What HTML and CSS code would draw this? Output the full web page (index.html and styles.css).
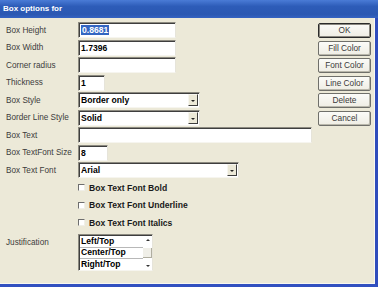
FILE: index.html
```html
<!DOCTYPE html>
<html lang="en">
  <head>
    <meta charset="UTF-8" />
    <title>Box options for</title>
    <link rel="stylesheet" href="styles.css">
  </head>
  <body>
    <div class="dialog">
      <!-- Title bar -->
      <div class="title-bar">Box options for</div>

      <div class="dialog-body">
        <!-- Form fields -->
        <div class="form">
          <div class="label">Box Height</div>
          <div class="field w-98"><span class="sel">0.8681</span></div>

          <div class="label">Box Width</div>
          <div class="field w-98">1.7396</div>

          <div class="label">Corner radius</div>
          <div class="field w-98"></div>

          <div class="label">Thickness</div>
          <div class="field w-27">1</div>

          <div class="label">Box Style</div>
          <div class="combo w-122">
            <span class="combo-text">Border only</span>
            <span class="combo-btn"></span>
          </div>

          <div class="label">Border Line Style</div>
          <div class="combo w-122">
            <span class="combo-text">Solid</span>
            <span class="combo-btn"></span>
          </div>

          <div class="label">Box Text</div>
          <div class="field w-234"></div>

          <div class="label">Box TextFont Size</div>
          <div class="field w-30">8</div>

          <div class="label">Box Text Font</div>
          <div class="combo w-161">
            <span class="combo-text">Arial</span>
            <span class="combo-btn"></span>
          </div>

          <div class="label"></div>
          <label class="check"><span class="box"></span>Box Text Font Bold</label>

          <div class="label"></div>
          <label class="check"><span class="box"></span>Box Text Font Underline</label>

          <div class="label"></div>
          <label class="check"><span class="box"></span>Box Text Font Italics</label>

          <div class="label just-label">Justification</div>
          <div class="listbox">
            <div class="list-items">
              <div class="item">Left/Top</div>
              <div class="item focused">Center/Top</div>
              <div class="item">Right/Top</div>
            </div>
            <div class="scroll">
              <span class="arrow up"></span>
              <span class="thumb"></span>
              <span class="arrow down"></span>
            </div>
          </div>
        </div>

        <!-- Action buttons -->
        <div class="buttons">
          <div class="btn default">OK</div>
          <div class="btn">Fill Color</div>
          <div class="btn">Font Color</div>
          <div class="btn">Line Color</div>
          <div class="btn">Delete</div>
          <div class="btn">Cancel</div>
        </div>
      </div>
    </div>
  </body>
</html>
```

FILE: styles.css
```css
/* Reset */
html,
body {
  margin: 0;
  padding: 0;
  background: #ece9d8;
  font-family: "Liberation Sans", Arial, sans-serif;
  overflow: hidden;
}

/* Window frame */
.dialog {
  width: 378px;
  height: 287px;
  box-sizing: border-box;
  display: flex;
  flex-direction: column;
  border-right: 3px solid #2f4cbc;
  border-bottom: 3px solid #3150c0;
  background: #ece9d8;
}

.title-bar {
  height: 18px;
  flex: none;
  line-height: 18px;
  padding-left: 3px;
  margin-right: -3px;
  color: white;
  font-weight: bold;
  font-size: 8px;
  background: linear-gradient(to bottom, #4a7bd6 0%, #2d5cb8 35%, #2b58b2 80%, #3563c2 100%);
}

.dialog-body {
  flex: 1;
  display: flex;
  border-right: 1px solid #f8f7f0;
  border-bottom: 1px solid #f8f7f0;
}

/* Form grid */
.form {
  flex: 1;
  display: grid;
  grid-template-columns: 72px auto;
  grid-auto-rows: 16px;
  row-gap: 1.5px;
  padding: 4px 0 0 6px;
  justify-items: start;
  align-items: center;
}

.label {
  font-size: 8.2px;
  color: #3c3c3c;
  white-space: nowrap;
}

.field,
.combo,
.listbox {
  box-sizing: border-box;
  background: white;
  border-top: 1px solid #8c8a80;
  border-left: 1px solid #8c8a80;
  border-right: 1px solid #e6e4da;
  border-bottom: 1px solid #f6f5ef;
  box-shadow: inset 1px 1px 0 #3e3e3e;
}

.field {
  height: 16px;
  padding: 2px 0 0 2px;
  font-size: 8.6px;
  font-weight: bold;
  line-height: 11px;
  color: black;
}

.sel {
  background: #3466c2;
  color: white;
  padding: 0 1px;
}

.w-98 { width: 98px; }
.w-27 { width: 27px; }
.w-30 { width: 30px; }
.w-122 { width: 122px; }
.w-161 { width: 161px; }
.w-234 { width: 234px; }

/* Combo boxes */
.combo {
  height: 16px;
  display: flex;
  align-items: stretch;
  padding: 1px 1px 1px 2px;
}

.combo-text {
  flex: 1;
  font-size: 8.6px;
  font-weight: bold;
  line-height: 13px;
}

.combo-btn {
  width: 10px;
  box-sizing: border-box;
  background: #ece9d8;
  border-top: 1px solid #f7f6f0;
  border-left: 1px solid #f7f6f0;
  border-right: 1px solid #3c3c3c;
  border-bottom: 1px solid #3c3c3c;
  position: relative;
}

.combo-btn::after {
  content: "";
  position: absolute;
  left: 2px;
  top: 5px;
  border-left: 2px solid transparent;
  border-right: 2px solid transparent;
  border-top: 2px solid #222;
}

/* Checkboxes */
.check {
  display: flex;
  align-items: center;
  font-size: 8.6px;
  font-weight: bold;
  color: #1a1a1a;
  white-space: nowrap;
}

.check .box {
  width: 7px;
  height: 7px;
  box-sizing: border-box;
  margin-right: 4px;
  background: white;
  border-top: 1px solid #6e6e6e;
  border-left: 1px solid #6e6e6e;
  border-right: 1px solid #f0efe8;
  border-bottom: 1px solid #f0efe8;
}

/* Justification list */
.just-label {
  align-self: start;
  margin-top: 6px;
}

.listbox {
  grid-row: span 2;
  align-self: start;
  margin-top: 2px;
  width: 75px;
  height: 37px;
  display: flex;
  padding: 1px 0 0 1px;
}

.list-items {
  flex: 1;
  display: flex;
  flex-direction: column;
}

.item {
  height: 11.5px;
  padding-left: 1px;
  font-size: 8.6px;
  font-weight: bold;
  line-height: 11px;
  box-sizing: border-box;
}

.item.focused {
  border-top: 1px solid #b8b8b8;
  border-bottom: 1px solid #b8b8b8;
  line-height: 9px;
}

.scroll {
  width: 9px;
  display: flex;
  flex-direction: column;
  align-items: center;
  justify-content: space-between;
  padding: 3px 0;
  box-sizing: border-box;
}

.thumb {
  width: 8px;
  height: 9px;
  background: #f0efe8;
  border-right: 1px solid #b0aea0;
  border-bottom: 1px solid #b0aea0;
}

.arrow {
  width: 0;
  height: 0;
  border-left: 2px solid transparent;
  border-right: 2px solid transparent;
}

.arrow.up {
  border-bottom: 2px solid #333;
}

.arrow.down {
  border-top: 2px solid #333;
}

/* Buttons column */
.buttons {
  display: flex;
  flex-direction: column;
  gap: 2.5px;
  padding-top: 5px;
  margin-right: 3px;
}

.btn {
  width: 53px;
  height: 15px;
  box-sizing: border-box;
  border: 1px solid #6f6f6a;
  border-radius: 2px;
  box-shadow: inset -1px -1px 0 #b9b7ab;
  background: linear-gradient(to bottom, #fbfbf8, #efede4);
  font-size: 8.3px;
  color: #3a3a3a;
  text-align: center;
  line-height: 13px;
}

.btn.default {
  border: 1px solid #2a2a2a;
  box-shadow: inset 0 0 0 1px #8a8880;
}
```
